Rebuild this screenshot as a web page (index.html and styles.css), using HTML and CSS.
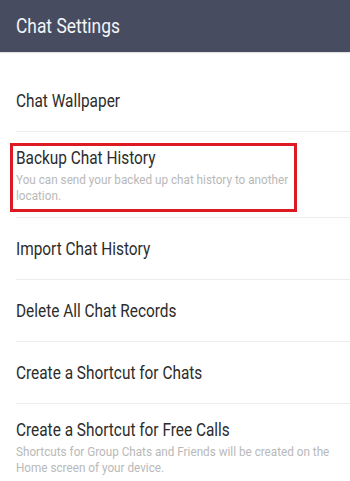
FILE: index.html
```html
<!DOCTYPE html>
<html>
<head>
<meta charset="utf-8">
<link rel="stylesheet" href="styles.css">
</head>
<body>
<header class="topbar"><h1 class="title">Chat Settings</h1></header>
<ul class="list">
  <li class="row"><span class="label">Chat Wallpaper</span></li>
  <li class="row row-sub backup">
    <span class="label">Backup Chat History</span>
    <span class="desc">You can send your backed up chat history to another<br>location.</span>
    <span class="highlight"></span>
  </li>
  <li class="row"><span class="label">Import Chat History</span></li>
  <li class="row"><span class="label">Delete All Chat Records</span></li>
  <li class="row"><span class="label">Create a Shortcut for Chats</span></li>
  <li class="row row-sub last">
    <span class="label">Create a Shortcut for Free Calls</span>
    <span class="desc">Shortcuts for Group Chats and Friends will be created on the<br>Home screen of your device.</span>
  </li>
</ul>
</body>
</html>
```
FILE: styles.css
```css
* { box-sizing: border-box; }
html, body { margin: 0; padding: 0; background: #fff; }
body { width: 350px; height: 481px; overflow: hidden; font-family: Roboto, "Noto Sans", sans-serif; }
.topbar { position: relative; height: 52px; background: #474c61; display: flex; align-items: center; padding: 0 16px; box-shadow: 0 1px 1px rgba(0, 0, 0, 0.12); }
.title { margin: 0; font-size: 20px; font-weight: 400; color: #f4f5f8; line-height: 24px; white-space: nowrap; transform: scaleX(0.87); transform-origin: left center; }
.list { list-style: none; margin: 0; padding: 18px 0 0 0; }
.row { position: relative; margin-left: 16px; padding-right: 16px; height: 62px; display: flex; align-items: center; border-bottom: 1px solid #ececec; }
.label { display: block; font-size: 18px; color: #2c2c2c; line-height: 22px; white-space: nowrap; transform: scaleX(0.855); transform-origin: left center; }
.row-sub { height: auto; display: flex; flex-direction: column; align-items: flex-start; padding-top: 15px; padding-bottom: 14px; }
.desc { display: block; margin-top: 3px; font-size: 13.5px; line-height: 15.5px; color: #b9b9b9; white-space: nowrap; transform: scaleX(0.868); transform-origin: left center; }
.last { border-bottom: none; padding-top: 15px; }
.highlight { position: absolute; left: -6px; top: 11px; width: 287px; height: 69px; border: 3px solid #dc1a22; }
```
